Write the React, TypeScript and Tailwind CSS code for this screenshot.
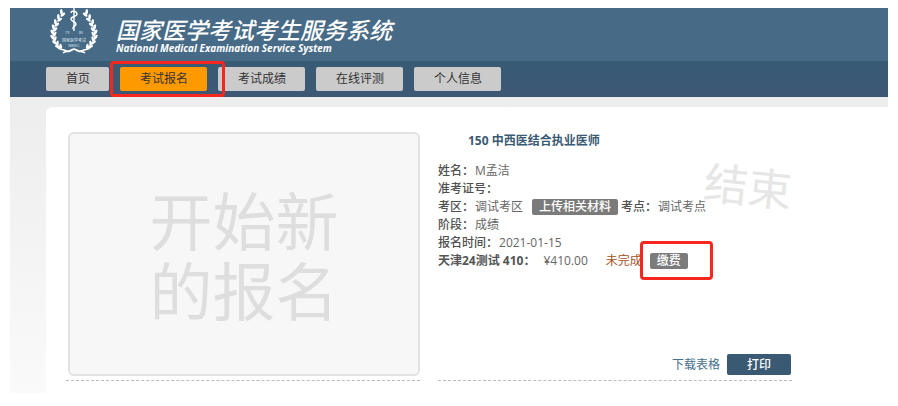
import type { ReactNode } from "react";

const NAV_ITEMS = [
  { label: "首页", active: false },
  { label: "考试报名", active: true },
  { label: "考试成绩", active: false },
  { label: "在线评测", active: false },
  { label: "个人信息", active: false },
];

// Left branch of the laurel: x, y and angle of each leaf pair.
const LEAVES = [
  [12, 4, 20],
  [9, 9, 25],
  [6, 14, 20],
  [4, 19, 12],
  [3, 24, 0],
  [3, 29, -10],
  [5, 34, -25],
  [8, 38, -45],
];

function Branch() {
  return (
    <g fill="#fff">
      {LEAVES.map(([x, y, angle]) => (
        <g key={y} transform={`translate(${x} ${y}) rotate(${angle})`}>
          <ellipse cx="-0.6" cy="0" rx="1.4" ry="3" transform="rotate(-28)" />
          <ellipse cx="2.6" cy="1" rx="1.3" ry="2.8" transform="rotate(32)" />
        </g>
      ))}
      <path
        d="M8 40c2 2 4 1 6 2s4 2 7 0l3-1M13 45c2-2 5-1 7-2l4-2"
        fill="none"
        stroke="#fff"
        strokeWidth="1.4"
      />
    </g>
  );
}

function Logo() {
  return (
    <svg viewBox="0 0 48 47" className="h-[47px] w-12 shrink-0" aria-hidden="true">
      <Branch />
      <g transform="matrix(-1 0 0 1 48 0)">
        <Branch />
      </g>
      <path d="M24 0v23" stroke="#fff" strokeWidth="1.4" />
      <path
        d="M21 5c0-3 6-2 6 1s-6 2-6 5 5 2 5 5-4 2-3 5"
        fill="none"
        stroke="#fff"
        strokeWidth="1.4"
      />
      <g fill="#dbe6ee" textAnchor="middle" fontFamily="'Open Sans', 'Noto Sans CJK SC', sans-serif">
        <text x="17" y="26" fontSize="4">19</text>
        <text x="31" y="26" fontSize="4">85</text>
        <text x="24" y="34" fontSize="4">国家医学考试</text>
        <text x="24" y="39" fontSize="4">NMEC</text>
      </g>
    </svg>
  );
}

// Red frame laid over a control that the guide points to.
function Marker({ className }: { className: string }) {
  return (
    <span
      className={`pointer-events-none absolute z-10 rounded-sm border-3 border-[#f5271f] ${className}`}
    />
  );
}

function Label({ children }: { children: ReactNode }) {
  return <dt className="font-medium text-[#505050]">{children}</dt>;
}

function SmallButton({ children }: { children: ReactNode }) {
  return (
    <button
      type="button"
      className="h-4 rounded-xs bg-[#7b7b7b] px-[7px] text-center leading-4 font-medium text-white"
    >
      {children}
    </button>
  );
}

export default function App() {
  return (
    <div className="bg-white px-[10px] py-2 font-['Open_Sans','Noto_Sans_CJK_SC',sans-serif] text-[12px] leading-[18px] text-[#666]">
      <header>
        <div className="flex h-[53px] items-start gap-[18px] bg-[#476b87] pl-10 text-white">
          <Logo />
          <div className="pt-[9px] whitespace-nowrap italic">
            <h1 className="text-[23px] leading-[26px] font-medium">国家医学考试考生服务系统</h1>
            <p className="text-[10px] leading-[10px] font-bold">
              National Medical Examination Service System
            </p>
          </div>
        </div>
        <nav className="flex gap-[11px] bg-linear-to-b from-[#385b74] to-[#3d5875] py-[6px] pl-9">
          {NAV_ITEMS.map((item) => (
            <div key={item.label} className="relative">
              <a
                href="#"
                className={`block rounded-xs py-[3px] pr-[19px] pl-5 text-[#333] ${
                  item.active ? "bg-[#ff9900]" : "bg-[#cbcbcb]"
                }`}
              >
                {item.label}
              </a>
              {item.active && <Marker className="-top-[6px] -right-[18px] -bottom-[6px] -left-[10px]" />}
            </div>
          ))}
        </nav>
      </header>

      <main className="bg-linear-to-b from-[#ededed] to-[#fafafa] pt-[10px] pl-9">
        <div className="grid grid-cols-2 gap-[18px] rounded-tl-md bg-white pt-[25px] pr-24 pb-3 pl-5">
          <section className="border-b border-dashed border-[#bbb] pb-1 pl-[2px]">
            <button
              type="button"
              className="flex h-[244px] w-full items-center justify-center rounded-md border-2 border-[#e2e2e2] bg-[#f7f7f7] pt-1 text-[63px] leading-[70px] text-[#dedede]"
            >
              <span>
                开始新
                <br />
                的报名
              </span>
            </button>
          </section>

          <section className="relative flex flex-col border-b border-dashed border-[#bbb] pb-[5px] whitespace-nowrap">
            <span className="absolute top-6 right-0 rotate-6 text-[44px] leading-[60px] text-[#e6e6e6]">
              结束
            </span>
            <h2 className="mb-3 pl-[30px] font-bold text-[#3a5a74]">150 中西医结合执业医师</h2>
            <dl className="relative">
              <div className="flex gap-px">
                <Label>姓名：</Label>
                <dd>M孟洁</dd>
              </div>
              <div className="flex">
                <Label>准考证号：</Label>
                <dd />
              </div>
              <div className="flex items-center gap-px">
                <Label>考区：</Label>
                <dd className="mr-2">调试考区</dd>
                <dd className="mr-[2px] flex">
                  <SmallButton>上传相关材料</SmallButton>
                </dd>
                <Label>考点：</Label>
                <dd>调试考点</dd>
              </div>
              <div className="flex gap-px">
                <Label>阶段：</Label>
                <dd>成绩</dd>
              </div>
              <div className="flex gap-px">
                <Label>报名时间：</Label>
                <dd>2021-01-15</dd>
              </div>
              <div className="flex items-center">
                <dt className="mr-2 font-bold text-[#555]">天津24测试 410：</dt>
                <dd className="mr-[18px]">¥410.00</dd>
                <dd className="mr-2 text-[#a8501e]">未完成</dd>
                <dd className="relative flex">
                  <SmallButton>缴费</SmallButton>
                  <Marker className="-top-3 -right-[25px] -bottom-[11px] -left-[10px]" />
                </dd>
              </div>
            </dl>
            <div className="mt-auto flex items-center justify-end gap-[7px] pr-px">
              <a href="#" className="text-[#47708c]">
                下载表格
              </a>
              <button
                type="button"
                className="h-[21px] w-16 rounded-xs bg-[#3a5a74] leading-[21px] font-medium text-white"
              >
                打印
              </button>
            </div>
          </section>
        </div>
      </main>
    </div>
  );
}
